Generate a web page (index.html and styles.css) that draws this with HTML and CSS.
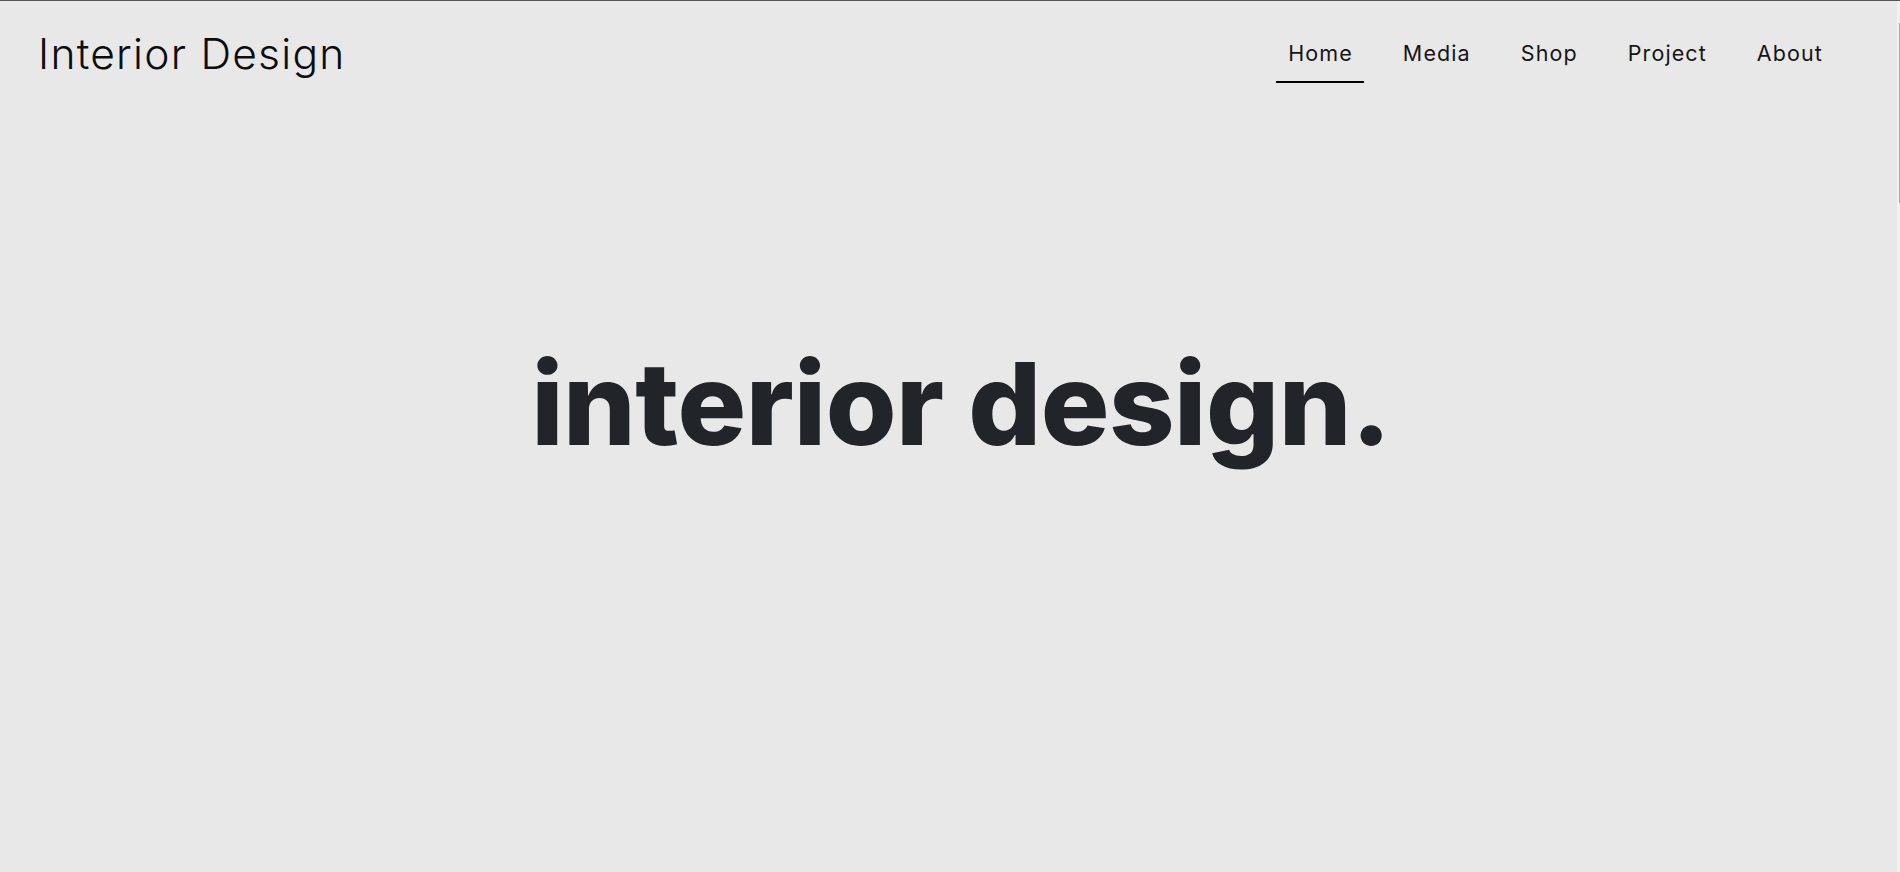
FILE: index.html
```html
<!DOCTYPE html>
<html lang="en">
<head>
<meta charset="utf-8">
<title>Interior Design</title>
<link rel="stylesheet" href="styles.css">
</head>
<body>
<header class="site-header">
  <a class="brand" href="#">Interior Design</a>
  <nav class="main-nav">
    <a class="nav-link active" href="#">Home</a>
    <a class="nav-link" href="#">Media</a>
    <a class="nav-link" href="#">Shop</a>
    <a class="nav-link" href="#">Project</a>
    <a class="nav-link" href="#">About</a>
  </nav>
</header>
<main class="hero">
  <h1 class="hero-title">interior design.</h1>
</main>
<div class="scroll-track" aria-hidden="true"><div class="scroll-thumb"></div></div>
</body>
</html>
```
FILE: styles.css
```css
html, body { margin: 0; padding: 0; }
body {
  box-sizing: border-box;
  height: 100vh;
  overflow: hidden;
  background: #e8e8e8;
  border-top: 1px solid #555;
  font-family: Inter, "Open Sans", sans-serif;
  color: #111;
}
.site-header {
  display: flex;
  justify-content: space-between;
  align-items: flex-start;
  height: 82px;
  padding: 0 66px 0 38px;
}
.brand {
  margin-top: 27px;
  font-size: 42.5px;
  line-height: 51px;
  font-weight: 300;
  letter-spacing: 1.25px;
  color: #0d0d0d;
  text-decoration: none;
}
.main-nav {
  display: flex;
  gap: 27px;
  margin-top: 39px;
}
.nav-link {
  padding: 0 11px 15px 12px;
  font-size: 21.5px;
  line-height: 26px;
  font-weight: 400;
  letter-spacing: 1.1px;
  color: #151515;
  text-decoration: none;
  border-bottom: 2px solid transparent;
}
.nav-link.active { border-bottom-color: #000; }
.hero {
  display: flex;
  justify-content: center;
  padding: 252px 0 0 22px;
}
.hero-title {
  margin: 0;
  font-family: Inter, sans-serif;
  font-weight: 800;
  font-size: 114.5px;
  line-height: 1.2;
  letter-spacing: -0.5px;
  color: #212529;
}
.scroll-track {
  position: fixed;
  top: 1px;
  right: 0;
  bottom: 0;
  width: 3px;
  background: #f1f1f1;
}
.scroll-thumb {
  margin: 22px 0 0 2px;
  width: 1px;
  height: 180px;
  background: #a8a8a8;
}
```
